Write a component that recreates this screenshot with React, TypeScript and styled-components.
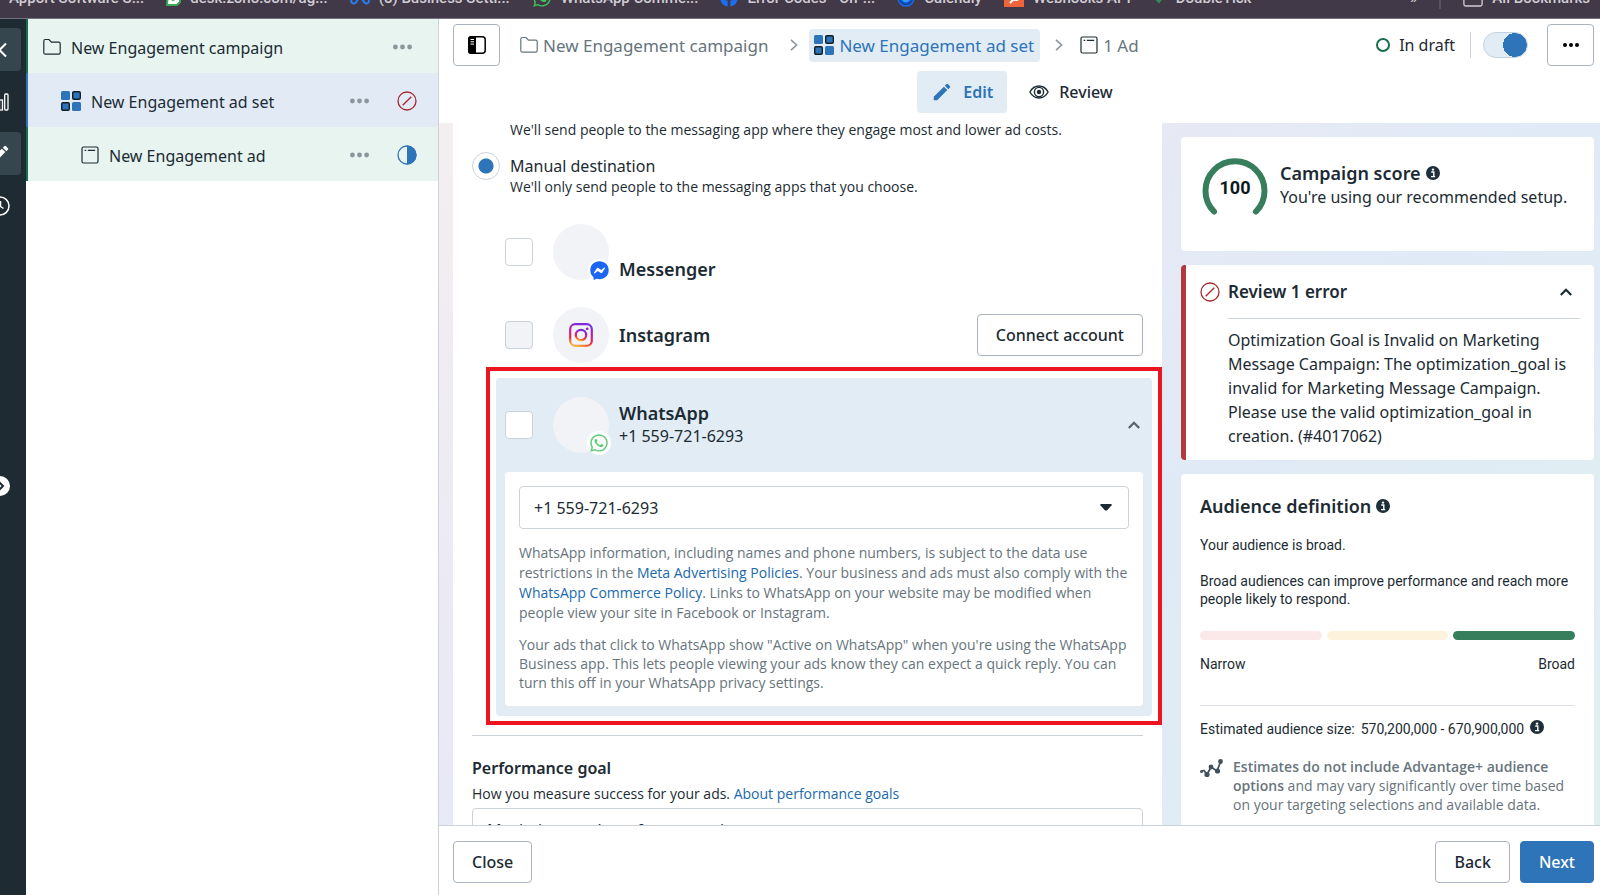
import React from "react";
import styled, { createGlobalStyle, css } from "styled-components";
import { FaFacebook, FaFacebookMessenger, FaWhatsapp } from "react-icons/fa";
import { FaMeta } from "react-icons/fa6";
import { MdEdit } from "react-icons/md";

const color = {
  ink: "#1c2b33",
  muted: "#67747c",
  line: "#cbd2d9",
  button: "#a9b4c0",
  blue: "#2d74b8",
  link: "#2069ad",
  paleBlue: "#e2ecf5",
  paleGreen: "#e7f4ef",
  green: "#377e5c",
  darkGreen: "#17704a",
  red: "#a6282c",
  rail: "#1f2b32",
};

const GlobalStyle = createGlobalStyle`
  *, *::before, *::after { box-sizing: border-box; }
  body { margin: 0; background: #fff; color: ${color.ink}; overflow: hidden; }
  body, button, input, select { font-family: "Noto Sans", "Liberation Sans", sans-serif; font-size: 16px; }
  p, h2, h3, ul { margin: 0; padding: 0; }
  a { color: ${color.link}; text-decoration: none; }
  svg { display: block; flex: none; }
`;

/* ---------- page frame ---------- */

const Page = styled.div`
  display: flex;
  flex-direction: column;
  height: 100vh;
`;

const BookmarkBar = styled.nav`
  flex: none;
  height: 19px;
  display: flex;
  align-items: flex-end;
  overflow: hidden;
  background: #413848;
  border-bottom: 1px solid #77717d;
`;

const BookmarkRow = styled.div`
  flex: 1;
  height: 40px;
  display: flex;
  align-items: center;
  justify-content: space-between;
  padding-right: 10px;
`;

const BookmarkGroup = styled.div`
  display: flex;
  align-items: center;
  gap: 22px;
`;

const Bookmark = styled.a`
  display: flex;
  align-items: center;
  gap: 9px;
  color: #d0ccd4;
  font: 500 15px/20px Roboto, "Liberation Sans", sans-serif;
  white-space: nowrap;
`;

const BookmarkDivider = styled.span`
  width: 2px;
  height: 22px;
  background: #5c5463;
`;

const Body = styled.div`
  flex: 1;
  min-height: 0;
  display: flex;
`;

/* ---------- dark rail ---------- */

const Rail = styled.nav`
  flex: none;
  width: 26px;
  display: flex;
  flex-direction: column;
  align-items: flex-end;
  gap: 9px;
  padding: 9px 5px 0 0;
  overflow: hidden;
  background: ${color.rail};
`;

const RailButton = styled.button<{ $active?: boolean }>`
  flex: none;
  width: 42px;
  height: 43px;
  display: flex;
  align-items: center;
  justify-content: center;
  padding: 0;
  border: 0;
  border-radius: 4px;
  color: #fff;
  background: ${(p) => (p.$active ? "#36464f" : "transparent")};
`;

const RailHandle = styled(RailButton)`
  margin-top: 228px;
`;

const HandleDisc = styled.span`
  width: 20px;
  height: 20px;
  display: grid;
  place-items: center;
  border-radius: 10px;
  background: #fff;
  color: ${color.ink};
`;

/* ---------- campaign tree ---------- */

const Tree = styled.aside`
  flex: none;
  width: 413px;
  border-right: 1px solid ${color.line};
`;

const TreeRow = styled.div<{ $indent: number; $selected?: boolean }>`
  height: 54px;
  display: flex;
  align-items: center;
  padding: 2px 21px 0 ${(p) => p.$indent}px;
  border-left: 2px solid ${(p) => (p.$selected ? color.blue : color.darkGreen)};
  background: ${(p) => (p.$selected ? "#e2ebf5" : color.paleGreen)};
`;

const TreeName = styled.span`
  flex: 1;
  padding: 2px 0 0 10px;
  line-height: 24px;
`;

const DotsButton = styled.button<{ $last?: boolean }>`
  padding: 0;
  margin-right: ${(p) => (p.$last ? 5 : 28)}px;
  border: 0;
  background: none;
  color: #8a959c;
`;

/* ---------- editor ---------- */

const Editor = styled.main`
  flex: 1;
  min-width: 0;
  display: flex;
  flex-direction: column;
`;

const TopBar = styled.header`
  flex: none;
  display: flex;
  align-items: center;
  padding: 5px 6px 5px 14px;
`;

const Outlined = css`
  border: 1px solid ${color.button};
  border-radius: 4px;
  background: #fff;
  color: ${color.ink};
`;

const SquareButton = styled.button`
  ${Outlined}
  width: 47px;
  height: 42px;
  display: grid;
  place-items: center;
  padding: 0;
  color: #000;
`;

const Crumbs = styled.nav`
  flex: 1;
  display: flex;
  align-items: center;
  padding-left: 20px;
  font-size: 17px;
  color: #8a959c;
`;

const Crumb = styled.a<{ $current?: boolean }>`
  display: flex;
  align-items: center;
  gap: 5px;
  height: 33px;
  font-size: 17px;
  white-space: nowrap;
  color: ${color.muted};
  ${(p) =>
    p.$current &&
    css`
      padding: 0 6px 0 5px;
      border-radius: 4px;
      background: ${color.paleBlue};
      color: ${color.blue};
    `}
`;

const CrumbGap = styled.span<{ $wide?: boolean }>`
  display: flex;
  padding: ${(p) => (p.$wide ? "0 11px 0 22px" : "0 17px 0 15px")};
`;

const Status = styled.span`
  display: flex;
  align-items: center;
  gap: 9px;
  padding-right: 15px;
  border-right: 1px solid ${color.line};
  line-height: 26px;
`;

const StatusRing = styled.i`
  width: 14px;
  height: 14px;
  border: 2px solid ${color.darkGreen};
  border-radius: 7px;
`;

const Toggle = styled.input`
  appearance: none;
  width: 45px;
  height: 26px;
  margin: 0 19px 0 12px;
  border: 1px solid #c3d1df;
  border-radius: 13px;
  background: radial-gradient(circle at 31px 12px, ${color.blue} 12px, ${color.paleBlue} 12px);
`;

const Modes = styled.div`
  flex: none;
  display: flex;
  justify-content: center;
  padding: 0 0 10px 13px;
`;

const ModeButton = styled.button<{ $active?: boolean }>`
  display: flex;
  align-items: center;
  gap: 10px;
  height: 42px;
  padding: 0 14px;
  margin-right: 8px;
  border: 0;
  border-radius: 4px;
  font-weight: ${(p) => (p.$active ? 600 : 500)};
  color: ${(p) => (p.$active ? color.blue : color.ink)};
  background: ${(p) => (p.$active ? color.paleBlue : "transparent")};
`;

const Workspace = styled.div`
  flex: 1;
  min-height: 0;
  display: grid;
  grid-template-columns: minmax(0, 1fr) 438px;
  padding-left: 14px;
  overflow: hidden;
  background: linear-gradient(135deg, #f4eef0 0%, #e8e9f4 35%, #e0eaf7 60%, #e0f0ef 100%);
`;

/* The form is scrolled, so its first line meets the top edge. */
const Form = styled.section`
  margin-top: -3px;
  padding: 0 19px;
  background: #fff;
`;

const Small = styled.p<{ $muted?: boolean }>`
  font-family: "Open Sans", "Noto Sans", sans-serif;
  font-size: 14px;
  line-height: 20px;
  color: ${(p) => (p.$muted ? color.muted : "inherit")};
`;

const Indented = styled.div`
  padding-left: 38px;
`;

const RadioRow = styled.div`
  display: flex;
  gap: 10px;
  margin-top: 12px;
`;

const Radio = styled.input`
  appearance: none;
  flex: none;
  width: 28px;
  height: 28px;
  margin: 0;
  border: 1px solid ${color.line};
  border-radius: 14px;
  background: radial-gradient(circle, ${color.blue} 7px, #fff 8px);
`;

const RadioText = styled.div`
  display: flex;
  flex-direction: column;
  padding-top: 3px;
  line-height: 22px;
`;

const AppRow = styled.div`
  display: flex;
  align-items: center;
  height: 56px;
  margin-top: 27px;
  padding-left: 33px;
`;

const Check = styled.input`
  appearance: none;
  flex: none;
  width: 28px;
  height: 28px;
  margin: 0 20px 0 0;
  border: 1px solid ${color.line};
  border-radius: 4px;
  background: #fff;
  &:disabled { background: #f1f3f7; }
`;

const Avatar = styled.span`
  position: relative;
  flex: none;
  width: 56px;
  height: 56px;
  display: grid;
  place-items: center;
  margin-right: 10px;
  border-radius: 28px;
  background: #f1f3f7;
`;

const AvatarBadge = styled.span<{ $color: string }>`
  position: absolute;
  right: 0;
  bottom: 0;
  border-radius: 12px;
  background: #fff;
  box-shadow: 0 0 0 2px #fff;
  color: ${(p) => p.$color};
`;

const AppName = styled.label<{ $low?: boolean }>`
  flex: 1;
  align-self: ${(p) => (p.$low ? "flex-end" : "auto")};
  font-size: 18px;
  font-weight: 600;
  line-height: 22px;
`;

const PhoneLine = styled.span`
  display: block;
  font-size: 16px;
  font-weight: 400;
  line-height: 24px;
`;

const Button = styled.button<{ $primary?: boolean }>`
  ${Outlined}
  height: 42px;
  padding: 0 18px;
  font-weight: 500;
  ${(p) =>
    p.$primary &&
    css`
      border-color: ${color.blue};
      background: ${color.blue};
      color: #fff;
    `}
`;

const Highlight = styled.div`
  margin: 4px -19px 10px 14px;
  padding: 7px 6px 5px;
  border: 4px solid #ec1620;
`;

const Panel = styled.div`
  padding: 0 9px 10px;
  border-radius: 4px;
  background: ${color.paleBlue};
`;

const PanelHead = styled.div`
  display: flex;
  align-items: center;
  padding: 19px 0;
`;

const CollapseButton = styled.button<{ $dark?: boolean }>`
  display: grid;
  padding: 0;
  margin-right: ${(p) => (p.$dark ? 8 : 3)}px;
  border: 0;
  background: none;
  color: ${(p) => (p.$dark ? color.ink : "#56636b")};
`;

const PanelBody = styled.div`
  padding: 14px 4px 14px 14px;
  border-radius: 4px;
  background: #fff;
`;

const SelectWrap = styled.div`
  position: relative;
`;

const NumberSelect = styled(SelectWrap)`
  margin-right: 10px;
`;

const Select = styled.select`
  appearance: none;
  display: block;
  width: 100%;
  height: 43px;
  padding: 0 14px;
  border: 1px solid ${color.line};
  border-radius: 4px;
  background: #fff;
  color: ${color.ink};
`;

const Caret = styled.svg`
  position: absolute;
  right: 17px;
  top: 18px;
  pointer-events: none;
`;

const Policy = styled(Small)`
  margin-top: 14px;
`;

const Notice = styled(Small)`
  margin-top: 12px;
  line-height: 19px;
`;

const Goal = styled.div`
  border-top: 1px solid ${color.line};
  padding-top: 21px;
`;

const GoalTitle = styled.h3`
  margin-bottom: 5px;
  font-size: 16px;
  font-weight: 600;
  line-height: 22px;
`;

const GoalSelect = styled(SelectWrap)`
  margin-top: 4px;
`;

/* ---------- right column ---------- */

const Side = styled.aside`
  display: flex;
  flex-direction: column;
  gap: 14px;
  min-height: 0;
  padding: 14px 6px 0 19px;
`;

const Card = styled.section`
  flex: none;
  border-radius: 4px;
  background: #fff;
`;

const ScoreCard = styled(Card)`
  display: flex;
  align-items: flex-start;
  gap: 12px;
  padding: 21px;
  white-space: nowrap;
`;

const ScoreText = styled.div`
  padding-top: 3px;
  line-height: 24px;
`;

const CardTitle = styled.h2`
  display: flex;
  align-items: center;
  gap: 5px;
  font-size: 18px;
  font-weight: 600;
  line-height: 24px;
`;

const ErrorCard = styled(Card)`
  padding: 15px 14px 12px;
  border-left: 5px solid #b23a3c;
`;

const ErrorHead = styled.div`
  display: flex;
  align-items: center;
  gap: 8px;
`;

const ErrorTitle = styled.h2`
  flex: 1;
  font-size: 17px;
  font-weight: 600;
  line-height: 24px;
`;

const ErrorBody = styled.p`
  margin: 14px 0 0 28px;
  padding-top: 9px;
  border-top: 1px solid ${color.line};
  line-height: 24px;
`;

const AudienceCard = styled(Card)`
  padding: 20px 19px;
  font: 400 14px/18px Roboto, "Liberation Sans", sans-serif;
`;

const AudienceTitle = styled(CardTitle)`
  font-family: "Noto Sans", "Liberation Sans", sans-serif;
`;

const AudienceText = styled.p`
  margin-top: 18px;
`;

const Meter = styled.div`
  display: flex;
  gap: 5px;
  margin: 23px 0 15px;
`;

const MeterPart = styled.i<{ $fill: string }>`
  flex: 1;
  height: 9px;
  border-radius: 5px;
  background: ${(p) => p.$fill};
`;

const MeterLabels = styled.div`
  display: flex;
  justify-content: space-between;
  padding-bottom: 32px;
  border-bottom: 1px solid #dfe3e8;
`;

const Estimate = styled.p`
  display: flex;
  gap: 6px;
  padding: 14px 0 19px;
`;

const EstimateNote = styled.div`
  display: flex;
  gap: 10px;
`;

const NoteText = styled.p`
  font: 400 14px/19px "Open Sans", "Noto Sans", sans-serif;
  color: ${color.muted};
  b { font-weight: 600; }
`;

const Footer = styled.footer`
  flex: none;
  display: flex;
  gap: 10px;
  padding: 15px 6px 12px 14px;
  border-top: 1px solid ${color.line};
`;

const Spacer = styled.span`
  flex: 1;
`;

/* ---------- icons ---------- */

const FolderIcon = ({ size = 18 }: { size?: number }) => (
  <svg width={size} height={size} viewBox="0 0 18 18" fill="none" stroke="currentColor" strokeWidth="1.2">
    <path d="M.8 3Q.8 1.5 2.3 1.5H6l2.4 2.7h7.3q1.5 0 1.5 1.5v8.8q0 1.7-1.5 1.7H2.3Q.8 16.2.8 14.5z" />
  </svg>
);

const AdSetIcon = () => (
  <svg width="20" height="20" viewBox="0 0 20 20" fill={color.blue}>
    <rect x="0" y="0" width="9" height="9" rx="1.5" />
    <rect x="11.7" y=".7" width="7.6" height="7.6" rx="1.2" stroke="#10202c" strokeWidth="1.4" />
    <rect x=".7" y="11.7" width="7.6" height="7.6" rx="1.2" stroke="#10202c" strokeWidth="1.4" />
    <rect x="11" y="11" width="9" height="9" rx="1.5" />
  </svg>
);

const AdIcon = () => (
  <svg width="18" height="18" viewBox="0 0 18 18" fill="none" stroke={color.ink} strokeWidth="1.2">
    <rect x="1" y="1" width="16" height="16" rx="1.5" />
    <path d="M3.6 4.4h1.6M6.8 4.4h7.4" />
  </svg>
);

const Dots = ({ size = 19, r = 2.4 }: { size?: number; r?: number }) => (
  <svg width={size} height="6" viewBox={`0 0 ${size} 6`} fill="currentColor">
    <circle cx={r} cy="3" r={r} />
    <circle cx={size / 2} cy="3" r={r} />
    <circle cx={size - r} cy="3" r={r} />
  </svg>
);

const ErrorIcon = () => (
  <svg width="20" height="20" viewBox="0 0 20 20" fill="none" stroke={color.red} strokeWidth="1.3">
    <circle cx="10" cy="10" r="9" />
    <path d="M5.7 14.3l8.6-8.6" />
  </svg>
);

const HalfIcon = () => (
  <svg width="20" height="20" viewBox="0 0 20 20">
    <circle cx="10" cy="10" r="9" fill="none" stroke={color.blue} strokeWidth="1.3" />
    <path d="M10 .5a9.5 9.5 0 0 1 0 19z" fill={color.blue} />
  </svg>
);

const ChevronRight = () => (
  <svg width="8" height="12" viewBox="0 0 8 12" fill="none" stroke="currentColor" strokeWidth="1.6">
    <path d="M1 .8L6.6 6 1 11.2" />
  </svg>
);

const ChevronUp = () => (
  <svg width="12" height="8" viewBox="0 0 12 8" fill="none" stroke="currentColor" strokeWidth="2.2">
    <path d="M.8 7L6 1.8 11.2 7" />
  </svg>
);

const InfoIcon = () => (
  <svg width="14" height="14" viewBox="0 0 14 14">
    <circle cx="7" cy="7" r="7" fill="#1f2f3a" />
    <circle cx="7" cy="3.6" r="1.2" fill="#fff" />
    <path d="M5.2 6h2.6v4.4M5 10.6h4.2" fill="none" stroke="#fff" strokeWidth="1.4" />
  </svg>
);

const EyeIcon = () => (
  <svg width="20" height="14" viewBox="0 0 20 14" fill="none" stroke={color.ink} strokeWidth="1.4">
    <path d="M.9 7C3 3.2 6.2 1 10 1s7 2.2 9.1 6C17 10.8 13.800 13 10 13S3 10.800.9 7z" />
    <circle cx="10" cy="7" r="4.6" />
    <circle cx="10" cy="7" r="2.2" fill={color.ink} stroke="none" />
  </svg>
);

const PanelIcon = () => (
  <svg width="18" height="18" viewBox="0 0 18 18">
    <rect x=".8" y=".8" width="16.4" height="16.4" rx="3" fill="#fff" stroke="#000" strokeWidth="1.5" />
    <path d="M3 0h5v18H3a3 3 0 0 1-3-3V3a3 3 0 0 1 3-3z" />
    <path d="M2.5 3.5h3.5M2.5 5.8h3.5M2.5 8.1h3.5" stroke="#fff" strokeWidth="1" />
  </svg>
);

const InstagramIcon = () => (
  <svg width="24" height="24" viewBox="0 0 24 24" fill="none">
    <defs>
      <linearGradient id="ig" x1=".3" y1="1" x2=".6" y2="0">
        <stop offset="0" stopColor="#fbb03b" />
        <stop offset=".25" stopColor="#ee2a3a" />
        <stop offset=".6" stopColor="#c3219b" />
        <stop offset="1" stopColor="#7a2be0" />
      </linearGradient>
    </defs>
    <rect x="1.2" y="1.2" width="21.6" height="21.6" rx="5" stroke="url(#ig)" strokeWidth="2.2" />
    <circle cx="12" cy="12" r="5.2" stroke="url(#ig)" strokeWidth="2.2" />
    <circle cx="18.2" cy="5.8" r="1.4" fill="#8d28d0" />
  </svg>
);

const BarsIcon = () => (
  <svg width="18" height="18" viewBox="0 0 18 18" fill="none" stroke="currentColor" strokeWidth="1.3">
    <rect x="1" y="10" width="3" height="7" />
    <rect x="8.5" y="7" width="3" height="10" />
    <rect x="13.7" y="1" width="3.3" height="16" rx="1" />
  </svg>
);

const ClockIcon = () => (
  <svg width="20" height="20" viewBox="0 0 20 20" fill="none" stroke="currentColor" strokeWidth="1.5">
    <circle cx="10" cy="10" r="9" />
    <path d="M10.500 5v5.500l3 2" />
  </svg>
);

const Gauge = () => (
  <svg width="66" height="72" viewBox="0 0 66 72" role="img" aria-label="Score 100">
    <path
      d="M12 53.500A29.500 29.500 0 1 1 54 53.500"
      fill="none"
      stroke={color.green}
      strokeWidth="6"
      strokeLinecap="round"
    />
    <text x="33" y="36" textAnchor="middle" fontFamily="Roboto, sans-serif" fontWeight="700" fontSize="18" fill="#0c1a22">
      100
    </text>
  </svg>
);

const TrendIcon = () => (
  <svg width="23" height="22" viewBox="0 0 23 20" fill="none" stroke="#42525d" strokeWidth="1.8">
    <path d="M1 13.500l3-1 3 4L11 9l6 4 3.500-9" />
    <g fill="#42525d" stroke="none">
      <circle cx="1.500" cy="13.500" r="1.500" />
      <circle cx="7" cy="16.500" r="2.600" />
      <circle cx="11" cy="9" r="2.400" />
      <circle cx="17.500" cy="13" r="2.600" />
      <circle cx="20.500" cy="3.500" r="2.400" />
    </g>
  </svg>
);

const CaretDown = () => (
  <Caret width="12" height="7" viewBox="0 0 12 7">
    <path d="M1 0h10q1 0 .6 1.200L7.200 6.200Q6 7 4.800 6.200L.4 1.200Q0 0 1 0z" fill={color.ink} />
  </Caret>
);

const ChatMark = () => (
  <svg width="15" height="18" viewBox="0 0 15 18">
    <path d="M2 1h12v12l-3 3H1z" fill="#fff" stroke="#3aa757" strokeWidth="2" />
    <path d="M5 9l2 2 4-2" stroke="#3aa757" strokeWidth="2" fill="none" />
  </svg>
);

const CalendlyMark = () => (
  <svg width="18" height="18" viewBox="0 0 18 18">
    <circle cx="9" cy="9" r="8" fill="#123f8f" stroke="#1d6cf0" strokeWidth="1.5" />
    <circle cx="9" cy="9" r="5" fill="#2f9bff" stroke="#0b5be0" strokeWidth="1.5" />
  </svg>
);

const HubMark = () => (
  <svg width="20" height="18" viewBox="0 0 20 18">
    <rect width="20" height="18" fill="#f0643c" />
    <circle cx="12" cy="8" r="3" fill="none" stroke="#fff" strokeWidth="2" />
    <path d="M10 10l-4 4" stroke="#fff" strokeWidth="2" />
  </svg>
);

const TickMark = () => (
  <svg width="14" height="14" viewBox="0 0 14 14">
    <path d="M2 7l4 4 6-8" fill="none" stroke="#2f8d5b" strokeWidth="2" />
  </svg>
);

/* ---------- page ---------- */

const bookmarks: { label: string; icon?: React.ReactNode }[] = [
  { label: "Apport Software S..." },
  { label: "desk.zoho.com/ag...", icon: <ChatMark /> },
  { label: "(8) Business Setti...", icon: <FaMeta size={20} color="#2a7bf0" /> },
  { label: "WhatsApp Comme...", icon: <FaWhatsapp size={20} color="#3fc15a" /> },
  { label: "Error Codes - On-...", icon: <FaFacebook size={18} color="#1b6ff2" /> },
  { label: "Calendly", icon: <CalendlyMark /> },
  { label: "Webhooks API", icon: <HubMark /> },
  { label: "DoubleTick", icon: <TickMark /> },
];

export default function App() {
  return (
    <Page>
      <GlobalStyle />
      <BookmarkBar aria-label="Bookmarks">
        <BookmarkRow>
          <BookmarkGroup>
            {bookmarks.map((b) => (
              <Bookmark href="#" key={b.label}>
                {b.icon ?? <span />}
                {b.label}
              </Bookmark>
            ))}
          </BookmarkGroup>
          <BookmarkGroup>
            <Bookmark href="#">»</Bookmark>
            <BookmarkDivider />
            <Bookmark href="#">
              <FolderIcon size={20} />
              All Bookmarks
            </Bookmark>
          </BookmarkGroup>
        </BookmarkRow>
      </BookmarkBar>

      <Body>
        <Rail aria-label="Sections">
          <RailButton $active aria-label="Go back">
            <svg width="16" height="16" viewBox="0 0 16 16" fill="none" stroke="currentColor" strokeWidth="2">
              <path d="M14 1.500L7.500 8l6.500 6.500" />
            </svg>
          </RailButton>
          <RailButton aria-label="Reports">
            <BarsIcon />
          </RailButton>
          <RailButton $active aria-label="Edit">
            <MdEdit size={22} />
          </RailButton>
          <RailButton aria-label="History">
            <ClockIcon />
          </RailButton>
          <RailHandle aria-label="Expand">
            <HandleDisc>
              <svg width="18" height="10" viewBox="0 0 18 10" fill="none" stroke="currentColor" strokeWidth="2">
                <path d="M8 1l4 4-4 4" />
              </svg>
            </HandleDisc>
          </RailHandle>
        </Rail>

        <Tree>
          <TreeRow $indent={15}>
            <FolderIcon />
            <TreeName>New Engagement campaign</TreeName>
            <DotsButton $last aria-label="Campaign options"><Dots /></DotsButton>
          </TreeRow>
          <TreeRow $indent={33} $selected>
            <AdSetIcon />
            <TreeName>New Engagement ad set</TreeName>
            <DotsButton aria-label="Ad set options"><Dots /></DotsButton>
            <ErrorIcon />
          </TreeRow>
          <TreeRow $indent={53}>
            <AdIcon />
            <TreeName>New Engagement ad</TreeName>
            <DotsButton aria-label="Ad options"><Dots /></DotsButton>
            <HalfIcon />
          </TreeRow>
        </Tree>

        <Editor>
          <TopBar>
            <SquareButton aria-label="Toggle side panel"><PanelIcon /></SquareButton>
            <Crumbs aria-label="Breadcrumb">
              <Crumb href="#"><FolderIcon />New Engagement campaign</Crumb>
              <CrumbGap $wide><ChevronRight /></CrumbGap>
              <Crumb href="#" $current><AdSetIcon />New Engagement ad set</Crumb>
              <CrumbGap><ChevronRight /></CrumbGap>
              <Crumb href="#"><AdIcon />1 Ad</Crumb>
            </Crumbs>
            <Status><StatusRing />In draft</Status>
            <Toggle type="checkbox" role="switch" defaultChecked aria-label="Ad set active" />
            <SquareButton aria-label="More options"><Dots size={16} r={2} /></SquareButton>
          </TopBar>
          <Modes>
            <ModeButton $active><MdEdit size={22} />Edit</ModeButton>
            <ModeButton><EyeIcon />Review</ModeButton>
          </Modes>

          <Workspace>
            <Form>
              <Indented>
                <Small>We'll send people to the messaging app where they engage most and lower ad costs.</Small>
              </Indented>
              <RadioRow>
                <Radio
                  type="radio"
                  id="manual"
                  name="destination"
                  aria-describedby="manual-hint"
                  defaultChecked
                />
                <RadioText>
                  <label htmlFor="manual">Manual destination</label>
                  <Small id="manual-hint">We'll only send people to the messaging apps that you choose.</Small>
                </RadioText>
              </RadioRow>

              <AppRow>
                <Check type="checkbox" id="messenger" />
                <Avatar>
                  <AvatarBadge $color="#1b66f5"><FaFacebookMessenger size={19} /></AvatarBadge>
                </Avatar>
                <AppName htmlFor="messenger" $low>Messenger</AppName>
              </AppRow>
              <AppRow>
                <Check type="checkbox" id="instagram" disabled />
                <Avatar><InstagramIcon /></Avatar>
                <AppName htmlFor="instagram">Instagram</AppName>
                <Button>Connect account</Button>
              </AppRow>

              <Highlight>
                <Panel>
                  <PanelHead>
                    <Check type="checkbox" id="whatsapp" />
                    <Avatar>
                      <AvatarBadge $color="#5fcb74"><FaWhatsapp size={20} /></AvatarBadge>
                    </Avatar>
                    <AppName htmlFor="whatsapp">
                      WhatsApp
                      <PhoneLine>+1 559-721-6293</PhoneLine>
                    </AppName>
                    <CollapseButton aria-label="Collapse WhatsApp"><ChevronUp /></CollapseButton>
                  </PanelHead>
                  <PanelBody>
                    <NumberSelect>
                      <Select aria-label="WhatsApp number" defaultValue="a">
                        <option value="a">+1 559-721-6293</option>
                      </Select>
                      <CaretDown />
                    </NumberSelect>
                    <Policy $muted>
                      WhatsApp information, including names and phone numbers, is subject to the data use
                      <br />
                      restrictions in the <a href="#">Meta Advertising Policies</a>. Your business and ads must also
                      comply with the <a href="#">WhatsApp Commerce Policy</a>. Links to WhatsApp on your website may be
                      modified when
                      <br />
                      people view your site in Facebook or Instagram.
                    </Policy>
                    <Notice $muted>
                      Your ads that click to WhatsApp show "Active on WhatsApp" when you're using the WhatsApp Business
                      app. This lets people viewing your ads know they can expect a quick reply. You can
                      <br />
                      turn this off in your WhatsApp privacy settings.
                    </Notice>
                  </PanelBody>
                </Panel>
              </Highlight>

              <Goal>
                <GoalTitle>Performance goal</GoalTitle>
                <Small>How you measure success for your ads. <a href="#">About performance goals</a></Small>
                <GoalSelect>
                  <Select aria-label="Performance goal" defaultValue="a">
                    <option value="a">Maximize number of conversations</option>
                  </Select>
                  <CaretDown />
                </GoalSelect>
              </Goal>
            </Form>

            <Side>
              <ScoreCard>
                <Gauge />
                <ScoreText>
                  <CardTitle>Campaign score <InfoIcon /></CardTitle>
                  <p>You're using our recommended setup.</p>
                </ScoreText>
              </ScoreCard>
              <ErrorCard>
                <ErrorHead>
                  <ErrorIcon />
                  <ErrorTitle>Review 1 error</ErrorTitle>
                  <CollapseButton $dark aria-label="Collapse errors"><ChevronUp /></CollapseButton>
                </ErrorHead>
                <ErrorBody>
                  Optimization Goal is Invalid on Marketing Message Campaign: The optimization_goal is invalid for
                  Marketing Message Campaign. Please use the valid optimization_goal in creation. (#4017062)
                </ErrorBody>
              </ErrorCard>
              <AudienceCard>
                <AudienceTitle>Audience definition <InfoIcon /></AudienceTitle>
                <AudienceText>Your audience is broad.</AudienceText>
                <AudienceText>
                  Broad audiences can improve performance and reach more people likely to respond.
                </AudienceText>
                <Meter>
                  <MeterPart $fill="#fbe9ea" />
                  <MeterPart $fill="#fdf3dc" />
                  <MeterPart $fill={color.green} />
                </Meter>
                <MeterLabels><span>Narrow</span><span>Broad</span></MeterLabels>
                <Estimate>
                  <span>Estimated audience size:</span>
                  <span>570,200,000 - 670,900,000</span>
                  <InfoIcon />
                </Estimate>
                <EstimateNote>
                  <TrendIcon />
                  <NoteText>
                    <b>Estimates do not include Advantage+ audience options</b> and may vary significantly over time
                    based on your targeting selections and available data.
                  </NoteText>
                </EstimateNote>
              </AudienceCard>
            </Side>
          </Workspace>

          <Footer>
            <Button>Close</Button>
            <Spacer />
            <Button>Back</Button>
            <Button $primary>Next</Button>
          </Footer>
        </Editor>
      </Body>
    </Page>
  );
}
